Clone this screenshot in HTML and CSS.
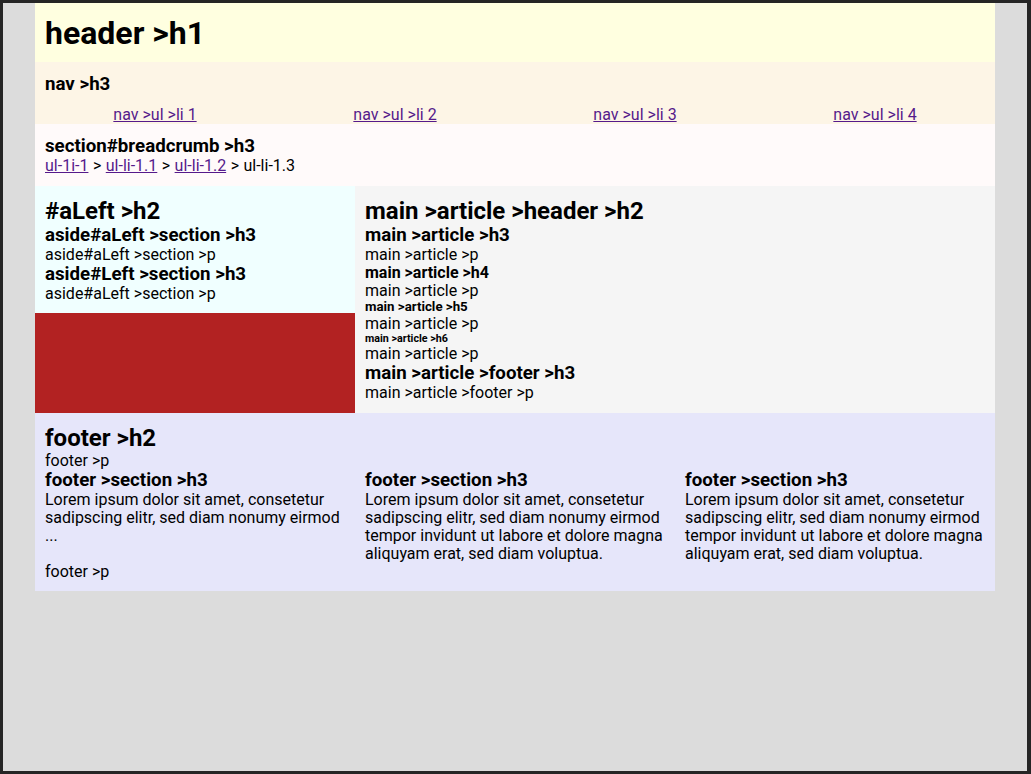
FILE: index.html
```html
<!DOCTYPE html>
<html lang="en">
<head>
<meta charset="utf-8">
<title>Layout</title>
<link rel="stylesheet" href="styles.css">
</head>
<body>
<div class="page">
  <header class="site-header">
    <h1>header &gt;h1</h1>
  </header>
  <nav class="site-nav">
    <h3>nav &gt;h3</h3>
    <ul class="nav-list">
      <li><a href="#">nav &gt;ul &gt;li 1</a></li>
      <li><a href="#">nav &gt;ul &gt;li 2</a></li>
      <li><a href="#">nav &gt;ul &gt;li 3</a></li>
      <li><a href="#">nav &gt;ul &gt;li 4</a></li>
    </ul>
  </nav>
  <section class="breadcrumb">
    <h3>section#breadcrumb &gt;h3</h3>
    <p><a href="#">ul-1i-1</a><span class="sep"> &gt; </span><a href="#">ul-li-1.1</a><span class="sep"> &gt; </span><a href="#">ul-li-1.2</a><span class="sep"> &gt; </span>ul-li-1.3</p>
  </section>
  <div class="content-row">
    <div class="side-col">
      <aside class="aside-left">
        <h2>#aLeft &gt;h2</h2>
        <section>
          <h3>aside#aLeft &gt;section &gt;h3</h3>
          <p>aside#aLeft &gt;section &gt;p</p>
        </section>
        <section>
          <h3>aside#Left &gt;section &gt;h3</h3>
          <p>aside#aLeft &gt;section &gt;p</p>
        </section>
      </aside>
      <div class="side-fill"></div>
    </div>
    <main class="main">
      <article>
        <header><h2>main &gt;article &gt;header &gt;h2</h2></header>
        <h3>main &gt;article &gt;h3</h3>
        <p>main &gt;article &gt;p</p>
        <h4>main &gt;article &gt;h4</h4>
        <p>main &gt;article &gt;p</p>
        <h5>main &gt;article &gt;h5</h5>
        <p>main &gt;article &gt;p</p>
        <h6>main &gt;article &gt;h6</h6>
        <p>main &gt;article &gt;p</p>
        <footer>
          <h3>main &gt;article &gt;footer &gt;h3</h3>
          <p>main &gt;article &gt;footer &gt;p</p>
        </footer>
      </article>
    </main>
  </div>
  <footer class="site-footer">
    <div class="footer-intro">
      <h2>footer &gt;h2</h2>
      <p>footer &gt;p</p>
    </div>
    <div class="footer-cols">
      <section class="footer-col">
        <h3>footer &gt;section &gt;h3</h3>
        <p>Lorem ipsum dolor sit amet, consetetur sadipscing elitr, sed diam nonumy eirmod<br>...</p>
        <p class="footer-note">footer &gt;p</p>
      </section>
      <section class="footer-col">
        <h3>footer &gt;section &gt;h3</h3>
        <p>Lorem ipsum dolor sit amet, consetetur sadipscing elitr, sed diam nonumy eirmod tempor invidunt ut labore et dolore magna aliquyam erat, sed diam voluptua.</p>
      </section>
      <section class="footer-col">
        <h3>footer &gt;section &gt;h3</h3>
        <p>Lorem ipsum dolor sit amet, consetetur sadipscing elitr, sed diam nonumy eirmod tempor invidunt ut labore et dolore magna aliquyam erat, sed diam voluptua.</p>
      </section>
    </div>
  </footer>
</div>
</body>
</html>
```

FILE: styles.css
```css
html {
  background: #252525;
}
body {
  margin: 3px 4px 3px 3px;
  height: 768px;
  background: #dcdcdc;
  font-family: Roboto, "Liberation Sans", sans-serif;
  font-size: 16px;
  line-height: 1.125;
  color: #000;
}
h1, h2, h3, h4, h5, h6, p, ul {
  margin: 0;
}
a {
  color: #551a8b;
}
.page {
  width: 960px;
  margin: 0 auto;
}
.site-header {
  background: #ffffe0;
  padding: 12px 10px 11px;
}
.site-header h1 {
  font-size: 32px;
}
.site-nav {
  background: #fdf5e6;
  padding: 12px 0 0;
}
.site-nav h3 {
  padding: 0 10px;
  margin-bottom: 11px;
}
.nav-list {
  list-style: none;
  padding: 0;
  display: flex;
}
.nav-list li {
  flex: 1;
  text-align: center;
}
.breadcrumb {
  background: #fffafa;
  padding: 12px 10px 11px;
}
.sep {
  margin: 0 0.5px;
}
.content-row {
  display: flex;
}
.side-col {
  width: 320px;
  display: flex;
  flex-direction: column;
}
.aside-left {
  background: #f0ffff;
  padding: 12px 10px 10px;
}
.side-fill {
  flex: 1;
  background: #b22222;
}
.main {
  flex: 1;
  background: #f5f5f5;
  padding: 12px 10px 11px;
}
h2 {
  font-size: 24px;
}
h3 {
  font-size: 18.72px;
}
h4 {
  font-size: 16px;
}
h5 {
  font-size: 13.28px;
}
h6 {
  font-size: 10.72px;
}
.site-footer {
  background: #e6e6fa;
  padding: 12px 0 10px;
}
.footer-intro {
  padding: 0 10px;
}
.footer-cols {
  display: flex;
}
.footer-col {
  width: 320px;
  padding: 0 10px;
  box-sizing: border-box;
}
.footer-note {
  margin-top: 18px;
}
```
